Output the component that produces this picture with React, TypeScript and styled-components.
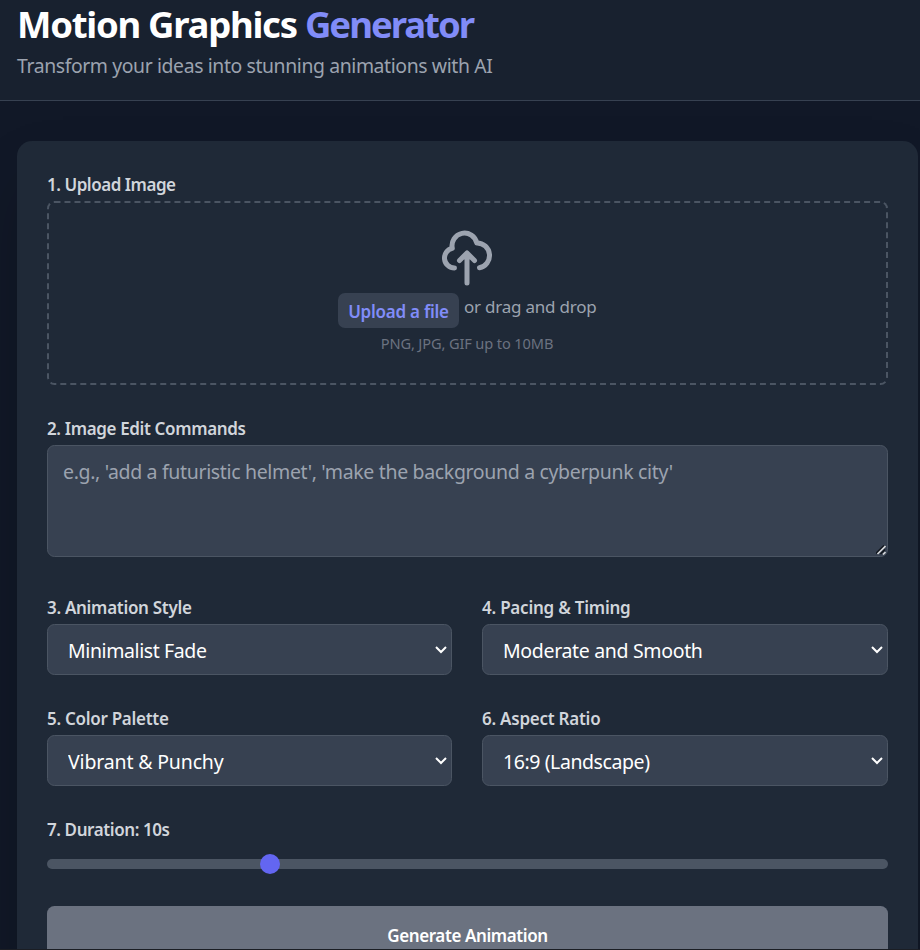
import React, { useState } from "react";
import styled, { createGlobalStyle } from "styled-components";

const GlobalStyle = createGlobalStyle`
  *, *::before, *::after { box-sizing: border-box; }
  body {
    margin: 0;
    background: #111827;
    color: #fff;
    font-family: "Noto Sans", "Open Sans", sans-serif;
  }
  h1, p { margin: 0; }
`;

const Page = styled.div`
  height: 950px;
  overflow: hidden;
  background: #111827;
  border-bottom: 1px solid #1b1e24;
`;

const Header = styled.header`
  height: 101px;
  padding: 0 17px;
  background: #18212f;
  border-bottom: 1px solid #374151;
`;

const Title = styled.h1`
  font-size: 36.5px;
  line-height: 49px;
  height: 49px;
  font-weight: 700;
  letter-spacing: -1.27px;
  white-space: nowrap;
`;

const Accent = styled.span`
  color: #818cf8;
  letter-spacing: -2px;
`;

const Subtitle = styled.p`
  margin-top: 2px;
  color: #9ca3af;
  font-size: 19.4px;
  line-height: 30px;
  letter-spacing: -0.39px;
`;

const Main = styled.main`
  padding: 40px 2px 0 17px;
`;

const Card = styled.form`
  display: flex;
  flex-direction: column;
  gap: 30px;
  height: 860px;
  padding: 30px;
  border-radius: 15px;
  background: #1f2937;
  box-shadow: 0 31px 62px -15px rgba(0, 0, 0, 0.25);
`;

const Field = styled.div`
  display: flex;
  flex-direction: column;
  gap: 5px;
`;

const Label = styled.label<{ $track: number }>`
  color: #d1d5db;
  font-size: 17px;
  font-weight: 600;
  line-height: 25px;
  height: 25px;
  padding-top: 1px;
  white-space: nowrap;
  letter-spacing: ${(p) => p.$track}px;
`;

const DropZone = styled.div`
  display: flex;
  flex-direction: column;
  align-items: center;
  gap: 5px;
  height: 184px;
  padding: 25px 1px 0 0;
  border: 2px dashed #4b5563;
  border-radius: 7.5px;
`;

const CloudIcon = styled.svg`
  flex: none;
  width: 60px;
  height: 60px;
  color: #9ca3af;
`;

const UploadRow = styled.div`
  display: flex;
  align-items: flex-start;
  gap: 5px;
`;

const UploadButton = styled.button`
  width: 121px;
  height: 35px;
  padding: 1px 0 0;
  border: 0;
  border-radius: 7px;
  background: #374151;
  color: #818cf8;
  font: 600 17px "Noto Sans", sans-serif;
  letter-spacing: -0.25px;
  white-space: nowrap;
`;

const DropHint = styled.span`
  width: 132px;
  color: #9ca3af;
  font-size: 17px;
  line-height: 27px;
  letter-spacing: -0.22px;
  white-space: nowrap;
`;

const FileHint = styled.p`
  color: #6b7280;
  font-size: 14.6px;
  line-height: 20px;
  letter-spacing: -0.12px;
`;

const CommandBox = styled.div`
  position: relative;
  height: 112px;
  margin-bottom: 7px;
`;

const CommandInput = styled.textarea`
  display: block;
  width: 100%;
  height: 100%;
  padding: 11px 15px;
  border: 1px solid #4b5563;
  border-radius: 7.5px;
  background: #374151;
  color: #fff;
  font: 400 19.5px/30px "Noto Sans", sans-serif;
  letter-spacing: -0.34px;
  resize: none;
  outline: none;
  &::placeholder { color: #9ca3af; opacity: 1; }
`;

const Grip = styled.svg`
  position: absolute;
  right: 2px;
  bottom: 2px;
  width: 10px;
  height: 10px;
`;

const OptionGrid = styled.div`
  display: grid;
  grid-template-columns: 405px 406px;
  gap: 30px;
`;

const SelectBox = styled.div`
  position: relative;
  height: 51px;
`;

const Select = styled.select<{ $track: number }>`
  appearance: none;
  width: 100%;
  height: 100%;
  padding: 2px 30px 0 20px;
  border: 1px solid #4b5563;
  border-radius: 7.5px;
  background: #374151;
  color: #fff;
  font: 400 19.5px "Noto Sans", sans-serif;
  letter-spacing: ${(p) => p.$track}px;
  outline: none;
`;

const Chevron = styled.svg`
  position: absolute;
  right: 5px;
  top: 21px;
  width: 12px;
  height: 9px;
  pointer-events: none;
`;

const Slider = styled.input`
  appearance: none;
  width: 100%;
  height: 10px;
  margin: 13px 0 7px;
  border-radius: 7.5px;
  background: #4b5563;
  outline: none;
  &::-webkit-slider-thumb {
    appearance: none;
    width: 20px;
    height: 20px;
    border: 0;
    border-radius: 50%;
    background: #6366f1;
  }
`;

const SubmitButton = styled.button`
  flex: none;
  height: 60px;
  padding: 0 0 2px;
  border: 0;
  border-radius: 7.5px;
  background: #6b7280;
  color: #fff;
  font: 600 17px "Noto Sans", sans-serif;
  letter-spacing: -0.4px;
`;

type Option = { label: string; value: string; labelTrack: number; valueTrack: number };

const options: Option[] = [
  { label: "3. Animation Style", value: "Minimalist Fade", labelTrack: -0.3, valueTrack: -0.4 },
  { label: "4. Pacing & Timing", value: "Moderate and Smooth", labelTrack: -0.23, valueTrack: -0.33 },
  { label: "5. Color Palette", value: "Vibrant & Punchy", labelTrack: -0.29, valueTrack: -0.16 },
  { label: "6. Aspect Ratio", value: "16:9 (Landscape)", labelTrack: -0.25, valueTrack: -0.42 },
];

function OptionField({ label, value, labelTrack, valueTrack }: Option) {
  return (
    <Field>
      <Label $track={labelTrack}>{label}</Label>
      <SelectBox>
        <Select $track={valueTrack} defaultValue={value}>
          <option>{value}</option>
        </Select>
        <Chevron viewBox="0 0 12 9" fill="none" stroke="#fff" strokeWidth="2">
          <path d="M1 2l5 5 5-5" />
        </Chevron>
      </SelectBox>
    </Field>
  );
}

export default function App() {
  const [duration, setDuration] = useState(10);
  return (
    <Page>
      <GlobalStyle />
      <Header>
        <Title>
          Motion Graphics <Accent>Generator</Accent>
        </Title>
        <Subtitle>Transform your ideas into stunning animations with AI</Subtitle>
      </Header>
      <Main>
        <Card>
          <Field>
            <Label $track={-0.47}>1. Upload Image</Label>
            <DropZone>
              <CloudIcon
                viewBox="0 0 24 24"
                fill="none"
                stroke="currentColor"
                strokeWidth="2"
                strokeLinecap="round"
                strokeLinejoin="round"
              >
                <path d="M7 16a4 4 0 01-.88-7.903A5 5 0 1115.9 6L16 6a5 5 0 011 9.9M15 13l-3-3m0 0l-3 3m3-3v12" />
              </CloudIcon>
              <UploadRow>
                <UploadButton type="button">Upload a file</UploadButton>
                <DropHint>or drag and drop</DropHint>
              </UploadRow>
              <FileHint>PNG, JPG, GIF up to 10MB</FileHint>
            </DropZone>
          </Field>
          <Field>
            <Label $track={-0.36}>2. Image Edit Commands</Label>
            <CommandBox>
              <CommandInput placeholder="e.g., 'add a futuristic helmet', 'make the background a cyberpunk city'" />
              <Grip viewBox="0 0 10 10" fill="none" strokeWidth="1.6">
                <path d="M0 8.5L8 0.5M4.5 9L9 4.5" stroke="#10151d" />
                <path d="M1.5 9L9.5 1M7 9.5L9.5 7" stroke="#d5d7da" />
              </Grip>
            </CommandBox>
          </Field>
          <OptionGrid>
            {options.map((o) => (
              <OptionField key={o.label} {...o} />
            ))}
          </OptionGrid>
          <Field>
            <Label $track={-0.41}>7. Duration: {duration}s</Label>
            <Slider
              type="range"
              min={3}
              max={30}
              value={duration}
              onChange={(e) => setDuration(Number(e.target.value))}
            />
          </Field>
          <SubmitButton type="button">Generate Animation</SubmitButton>
        </Card>
      </Main>
    </Page>
  );
}
